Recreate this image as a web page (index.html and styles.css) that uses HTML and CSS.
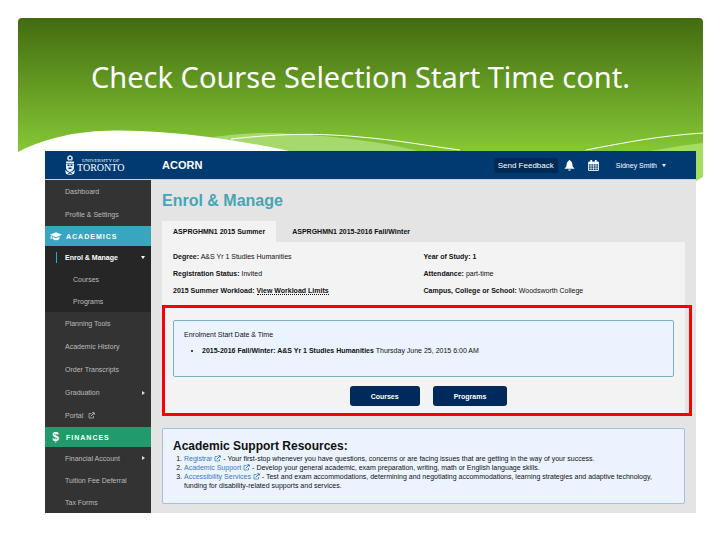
FILE: index.html
```html
<!DOCTYPE html>
<html lang="en">

  <head>
    <meta charset="utf-8">
    <title>Check Course Selection Start Time cont.</title>
    <link rel="stylesheet" href="styles.css">
  </head>

  <body>

    <svg class="defs" width="0" height="0" aria-hidden="true">
      <symbol id="ext" viewBox="0 0 14 14">
        <path d="M11 8v4H2V3h5" fill="none" stroke="currentColor" stroke-width="1.5"/>
        <path d="M5.5 8.5 12 2M8.5 1.5h4v4" fill="none" stroke="currentColor" stroke-width="2"/>
      </symbol>
    </svg>

    <header class="banner">
      <svg class="waves" viewBox="0 0 685 163" preserveAspectRatio="none" aria-hidden="true">
        <path d="M195 119C225 115 250 114 275 116C320 118 365 124 400 133V163H250Z" fill="#a6d96c"/>
        <path d="M600 139C630 133 660 128 685 125V163H600Z" fill="#a3dd62"/>
        <path d="M0 134C50 108 105 112 140 114C190 117 245 127 275 134L400 163H678L685 159V163H0Z" fill="#fff"/>
        <path d="M213 121C250 117 290 114 342 119C380 122 410 128 442 132" fill="none" stroke="#fff"/>
        <path d="M568 132C610 124 640 118 685 115" fill="none" stroke="#fff"/>
      </svg>
      <h1>Check Course Selection Start Time cont.</h1>
    </header>

    <div class="app">

      <div class="topbar">
        <a class="logo" href="#">
          <svg class="crest" viewBox="0 0 10 20" aria-hidden="true">
            <path d="M5 0 7.500 1.500 8 4 7 5.500H3L2 4 2.500 1.500Z" fill="#c3d3e3"/>
            <path d="M1 6.500H9V8H1ZM1 8.500H9V13Q8.500 16 5 17 1.500 16 1 13Z" fill="#e3ebf3"/>
            <path d="M2.500 9.500H4.500V11H2.500ZM5.500 9.500H7.500V11H5.500ZM3.500 12.500H6.500V14H3.500ZM4 2H6V4H4Z" fill="#003a70"/>
            <path d="M0 15 2 16.500 5 18 8 16.500 10 15 9 19 5 20 1 19Z" fill="#e3ebf3"/>
            <path d="M3 18.500H7" stroke="#003a70" stroke-width=".7"/>
          </svg>
          <span class="wordmark"><small>UNIVERSITY OF</small>TORONTO</span>
        </a>
        <span class="product">ACORN</span>
        <button class="feedback">Send Feedback</button>
        <button class="icon" aria-label="Notifications">
          <svg viewBox="0 0 12 12">
            <path d="M6 0Q7 0 7 1.200C9 2 9 4 9.300 6 9.600 8 11 8.600 11.500 9.500H.5C1 8.600 2.400 8 2.700 6 3 4 3 2 5 1.200Q5 0 6 0ZM4.500 10.300H7.500Q7.200 11.800 6 11.800 4.800 11.800 4.500 10.300Z" fill="#fff"/>
          </svg>
        </button>
        <button class="icon" aria-label="Calendar">
          <svg viewBox="0 0 12 12">
            <path d="M.6 2.500H11.400V11.400H.6Z" fill="none" stroke="#fff"/>
            <path d="M.6 2H11.400V4.500H.6ZM2.500 0H4.500V3H2.500ZM7.500 0H9.500V3H7.500Z" fill="#fff"/>
            <path d="M3.300 4V11M6 4V11M8.700 4V11M1 6.500H11M1 9H11" stroke="#fff" stroke-width=".7"/>
          </svg>
        </button>
        <button class="user">Sidney Smith <span class="caret down"></span></button>
      </div>

      <div class="body">

        <nav class="sidebar">
          <a href="#">Dashboard</a>
          <a href="#">Profile &amp; Settings</a>

          <h2 class="academics">
            <svg viewBox="0 0 14 10" aria-hidden="true">
              <path d="M7 0 14 3 7 6 0 3ZM3 5.200 7 7 11 5.200V7.500Q9.500 9.500 7 9.500 4.500 9.500 3 7.500ZM1 4H2V8H.5Z" fill="#fff"/>
            </svg>
            ACADEMICS
          </h2>
          <div class="open">
            <a class="current" href="#">Enrol &amp; Manage <span class="caret down"></span></a>
            <a class="sub" href="#">Courses</a>
            <a class="sub" href="#">Programs</a>
          </div>
          <a href="#">Planning Tools</a>
          <a href="#">Academic History</a>
          <a href="#">Order Transcripts</a>
          <a href="#">Graduation <span class="caret right"></span></a>
          <a href="#">Portal <svg class="ext"><use href="#ext"/></svg></a>

          <h2 class="finances">
            <span class="dollar" aria-hidden="true">$</span>
            FINANCES
          </h2>
          <div class="group">
            <a href="#">Financial Account <span class="caret right"></span></a>
            <a href="#">Tuition Fee Deferral</a>
            <a href="#">Tax Forms</a>
          </div>
        </nav>

        <main>
          <h2>Enrol &amp; Manage</h2>

          <div class="tabs">
            <button class="active">ASPRGHMN1 2015 Summer</button>
            <button>ASPRGHMN1 2015-2016 Fall/Winter</button>
          </div>

          <div class="panel">
            <div class="details">
              <p><b>Degree:</b> A&amp;S Yr 1 Studies Humanities</p>
              <p><b>Year of Study: 1</b></p>
              <p><b>Registration Status:</b> Invited</p>
              <p><b>Attendance:</b> part-time</p>
              <p><b>2015 Summer Workload: <a href="#">View Workload Limits</a></b></p>
              <p><b>Campus, College or School:</b> Woodsworth College</p>
            </div>

            <section class="start">
              <div class="notice">
                <h3>Enrolment Start Date &amp; Time</h3>
                <ul>
                  <li><b>2015-2016 Fall/Winter: A&amp;S Yr 1 Studies Humanities</b> Thursday June 25, 2015 6:00 AM</li>
                </ul>
              </div>
              <div class="actions">
                <button>Courses</button>
                <button>Programs</button>
              </div>
            </section>
          </div>

          <section class="resources">
            <h3>Academic Support Resources:</h3>
            <ol>
              <li><a href="#">Registrar <svg class="ext"><use href="#ext"/></svg></a> - Your first-stop whenever you have questions, concerns or are facing issues that are getting in the way of your success.</li>
              <li><a href="#">Academic Support <svg class="ext"><use href="#ext"/></svg></a> - Develop your general academic, exam preparation, writing, math or English language skills.</li>
              <li><a href="#">Accessibility Services <svg class="ext"><use href="#ext"/></svg></a> - Test and exam accommodations, determining and negotiating accommodations, learning strategies and adaptive technology, funding for disability-related supports and services.</li>
            </ol>
          </section>
        </main>

      </div>
    </div>

  </body>

</html>
```
FILE: styles.css
```css
* {
  box-sizing: border-box;
}

body {
  margin: 0;
  padding: 18px 17px 18px 18px;
  background: #fff;
  color: #111;
  font: 7px/9px "Liberation Sans", Arial, sans-serif;
}

h1, h2, h3, p, ul, ol {
  margin: 0;
  padding: 0;
}

button {
  margin: 0;
  padding: 0;
  border: 0;
  background: none;
  color: inherit;
  font: inherit;
  cursor: pointer;
}

a {
  color: inherit;
  text-decoration: none;
}

.defs {
  position: absolute;
}

/* slide banner */

.banner {
  position: relative;
  height: 163px;
  padding-top: 39px;
  border-radius: 4px 4px 0 0;
  background: linear-gradient(#426b10, #84c735 132px);
  overflow: hidden;
}

.waves {
  position: absolute;
  inset: 0;
  width: 100%;
  height: 100%;
}

.banner h1 {
  position: relative;
  color: #fff;
  font: 29px/40px "Noto Sans", "Open Sans", sans-serif;
  text-align: center;
}

/* application window */

.app {
  position: relative;
  margin: -30px 7px 0 27px;
}

.topbar {
  display: flex;
  align-items: center;
  height: 29px;
  padding-right: 30px;
  border-bottom: 1px solid #c5d3e0;
  background: #003a70;
  color: #fff;
}

.logo {
  display: flex;
  align-items: center;
  gap: 2px;
  width: 117px;
  padding-left: 20px;
}

.crest {
  width: 10px;
  height: 20px;
}

.wordmark {
  font: 10px/9px "Liberation Serif", serif;
}

.wordmark small {
  display: block;
  padding-left: 5px;
  font-size: 5px;
  line-height: 5px;
}

.product {
  margin-right: auto;
  font-size: 11px;
  font-weight: bold;
}

.feedback {
  height: 15px;
  padding: 0 4px;
  border-radius: 2px;
  background: #002a55;
  font-size: 8px;
}

.icon {
  width: 11px;
  height: 11px;
  margin-left: 6px;
}

.icon + .icon {
  margin-left: 13px;
}

.icon svg {
  display: block;
}

.user {
  display: flex;
  align-items: center;
  gap: 5px;
  margin-left: 17px;
}

.caret {
  display: inline-block;
  border: 2px solid transparent;
}

.down {
  border-top: 3px solid #fff;
  border-bottom: 0;
}

.right {
  border-left: 3px solid #ddd;
  border-right: 0;
}

.body {
  display: flex;
  background: #e4e4e4;
}

/* menu */

.sidebar {
  flex: none;
  width: 106px;
  background: #333;
  color: #bbb;
}

.sidebar a {
  display: flex;
  align-items: center;
  height: 23px;
  padding: 0 6px 0 20px;
}

.sidebar .caret {
  margin-left: auto;
}

.sidebar .ext {
  margin-left: 5px;
}

.sidebar h2 {
  display: flex;
  align-items: center;
  gap: 4px;
  height: 20px;
  padding-left: 5px;
  color: #fff;
  font-size: 7px;
  letter-spacing: 1px;
}

.sidebar h2 svg,
.dollar {
  width: 12px;
  height: 9px;
}

.dollar {
  font-size: 12px;
  line-height: 9px;
  text-align: center;
}

.academics {
  background: #38a6c0;
}

.finances {
  background: #219a6c;
}

.open {
  background: #262626;
}

.sidebar .open a,
.sidebar .group a {
  height: 22px;
}

.sidebar .sub {
  padding-left: 28px;
}

.sidebar .current {
  color: #fff;
  font-weight: bold;
  background: linear-gradient(#38a6c0, #38a6c0) 11px center / 1px 11px no-repeat;
}

.ext {
  width: 7px;
  height: 7px;
}

/* content */

main {
  flex: 1;
  padding: 11px 11px 9px;
}

main h2 {
  color: #47a5b5;
  font-size: 16px;
  line-height: 20px;
}

.tabs {
  display: flex;
  margin-top: 10px;
}

.tabs button {
  height: 21px;
  padding: 0 11px;
  font-weight: bold;
}

.tabs button + button {
  padding-left: 16px;
}

.tabs .active {
  background: #f3f3f3;
}

.panel {
  background: #f3f3f3;
}

.details {
  display: grid;
  grid-template-columns: 251fr 262fr;
  row-gap: 8px;
  padding: 10px 0 10px 11px;
}

.details a {
  border-bottom: 1px dotted #111;
}

.start {
  position: relative;
  padding: 15px 11px 10px;
}

/* highlight frame, runs past the panel on the right */
.start::after {
  content: "";
  position: absolute;
  inset: 0 -7px 0 0;
  border: 3px solid #f00505;
  pointer-events: none;
}

.notice {
  padding: 9px 10px 21px;
  border: 1px solid #7fadc6;
  border-radius: 2px;
  background: #ebf4fe;
}

.notice h3 {
  font-size: 7px;
  font-weight: normal;
}

.notice ul {
  margin-top: 7px;
  padding-left: 18px;
}

.actions {
  display: flex;
  justify-content: center;
  gap: 13px;
  margin-top: 9px;
  padding-left: 10px;
}

.actions button {
  height: 20px;
  padding: 0 21px;
  border-radius: 3px;
  background: #002a5c;
  color: #fff;
  font-weight: bold;
}

.resources {
  margin-top: 12px;
  padding: 10px 10px 13px;
  border: 1px solid #a3bfd9;
  border-radius: 2px;
  background: #ebf4fe;
}

.resources h3 {
  font-size: 12px;
  line-height: 15px;
}

.resources ol {
  padding-left: 11px;
}

.resources a {
  color: #3c78bb;
}

.resources .ext {
  vertical-align: -1px;
}
```
